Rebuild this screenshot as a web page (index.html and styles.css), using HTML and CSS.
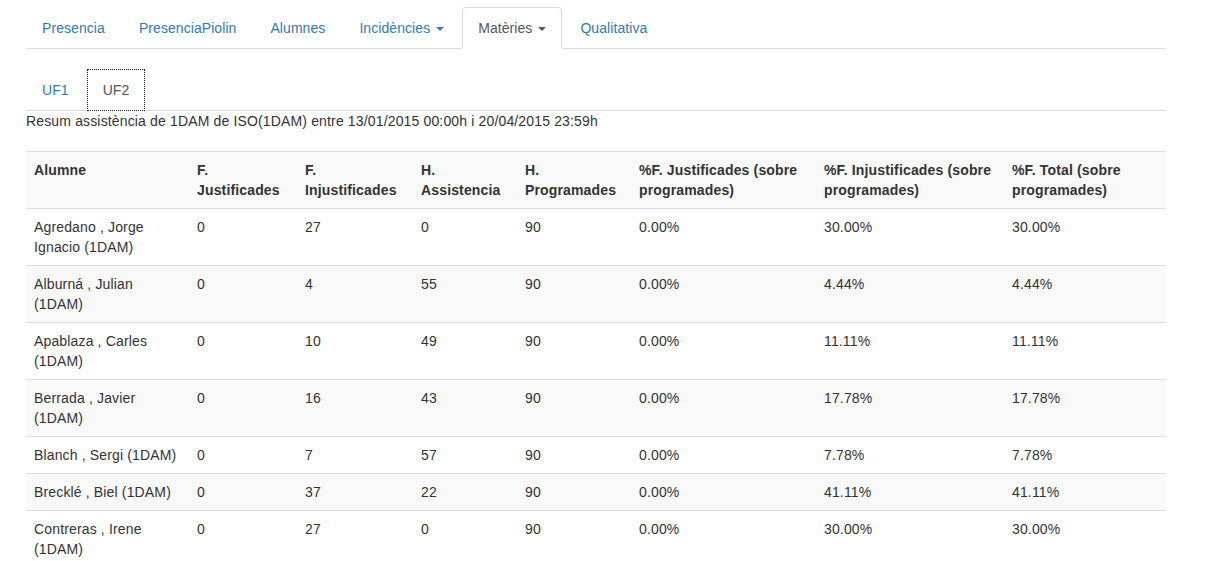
FILE: index.html
```html
<!DOCTYPE html>
<html lang="ca">
<head>
<meta charset="utf-8">
<title>Resum assistència</title>
<link rel="stylesheet" href="styles.css">
</head>
<body>
<div class="page">
  <ul class="tabs main-tabs">
    <li><a href="#">Presencia</a></li>
    <li><a href="#">PresenciaPiolin</a></li>
    <li><a href="#">Alumnes</a></li>
    <li><a href="#">Incidències <span class="caret"></span></a></li>
    <li class="active"><a href="#">Matèries <span class="caret"></span></a></li>
    <li><a href="#">Qualitativa</a></li>
  </ul>
  <ul class="tabs sub-tabs">
    <li><a href="#">UF1</a></li>
    <li class="active focused"><a href="#">UF2</a></li>
  </ul>
  <p class="summary">Resum assistència de 1DAM de ISO(1DAM) entre 13/01/2015 00:00h i 20/04/2015 23:59h</p>
  <table class="report">
    <colgroup>
      <col class="c1"><col class="c2"><col class="c3"><col class="c4"><col class="c5"><col class="c6"><col class="c7"><col class="c8">
    </colgroup>
    <tbody>
      <tr>
        <th>Alumne</th>
        <th>F. Justificades</th>
        <th>F. Injustificades</th>
        <th>H. Assistencia</th>
        <th>H. Programades</th>
        <th>%F. Justificades (sobre programades)</th>
        <th>%F. Injustificades (sobre programades)</th>
        <th>%F. Total (sobre programades)</th>
      </tr>
      <tr><td>Agredano , Jorge Ignacio (1DAM)</td><td>0</td><td>27</td><td>0</td><td>90</td><td>0.00%</td><td>30.00%</td><td>30.00%</td></tr>
      <tr><td>Alburná , Julian (1DAM)</td><td>0</td><td>4</td><td>55</td><td>90</td><td>0.00%</td><td>4.44%</td><td>4.44%</td></tr>
      <tr><td>Apablaza , Carles (1DAM)</td><td>0</td><td>10</td><td>49</td><td>90</td><td>0.00%</td><td>11.11%</td><td>11.11%</td></tr>
      <tr><td>Berrada , Javier (1DAM)</td><td>0</td><td>16</td><td>43</td><td>90</td><td>0.00%</td><td>17.78%</td><td>17.78%</td></tr>
      <tr><td>Blanch , Sergi (1DAM)</td><td>0</td><td>7</td><td>57</td><td>90</td><td>0.00%</td><td>7.78%</td><td>7.78%</td></tr>
      <tr><td>Brecklé , Biel (1DAM)</td><td>0</td><td>37</td><td>22</td><td>90</td><td>0.00%</td><td>41.11%</td><td>41.11%</td></tr>
      <tr><td>Contreras , Irene (1DAM)</td><td>0</td><td>27</td><td>0</td><td>90</td><td>0.00%</td><td>30.00%</td><td>30.00%</td></tr>
      <tr><td>Cuadrado , Marc (1DAM)</td><td>0</td><td>12</td><td>45</td><td>90</td><td>0.00%</td><td>13.33%</td><td>13.33%</td></tr>
    </tbody>
  </table>
</div>
</body>
</html>
```

FILE: styles.css
```css
* { box-sizing: border-box; }

html, body {
  margin: 0;
  padding: 0;
  background: #fff;
}

body {
  font-family: "Liberation Sans", Arial, Helvetica, sans-serif;
  font-size: 14px;
  line-height: 20px;
  letter-spacing: 0.15px;
  color: #333;
}

.page {
  width: 1140px;
  margin-left: 26px;
  padding-top: 7px;
}

.tabs {
  list-style: none;
  margin: 0;
  padding: 0;
  display: flex;
  border-bottom: 1px solid #ddd;
}

.tabs li {
  margin-bottom: -1px;
  margin-right: 2px;
}

.tabs a {
  display: block;
  padding: 10px 15px;
  line-height: 20px;
  letter-spacing: 0.07px;
  border: 1px solid transparent;
  border-radius: 4px 4px 0 0;
  color: #337ab7;
  text-decoration: none;
}

.tabs .active a {
  color: #555;
  background: #fff;
  border-color: #ddd #ddd transparent;
}

.tabs .focused a {
  border: 1px dotted #222;
  border-radius: 0;
}

.sub-tabs {
  margin-top: 20px;
}

.caret {
  display: inline-block;
  width: 0;
  height: 0;
  margin-left: 2px;
  vertical-align: middle;
  border-top: 4px solid;
  border-right: 4px solid transparent;
  border-left: 4px solid transparent;
}

.summary {
  margin: 0;
  line-height: 20px;
}

.report {
  margin-top: 20px;
  width: 1140px;
  border-collapse: collapse;
  border-spacing: 0;
  table-layout: fixed;
}

.c1 { width: 163px; }
.c2 { width: 108px; }
.c3 { width: 116px; }
.c4 { width: 104px; }
.c5 { width: 114px; }
.c6 { width: 185px; }
.c7 { width: 188px; }
.c8 { width: 162px; }

.report th,
.report td {
  padding: 8px;
  line-height: 20px;
  text-align: left;
  vertical-align: top;
  border-top: 1px solid #ddd;
}

.report th {
  font-weight: bold;
}

.report tr:nth-child(odd) {
  background: #f9f9f9;
}
```
